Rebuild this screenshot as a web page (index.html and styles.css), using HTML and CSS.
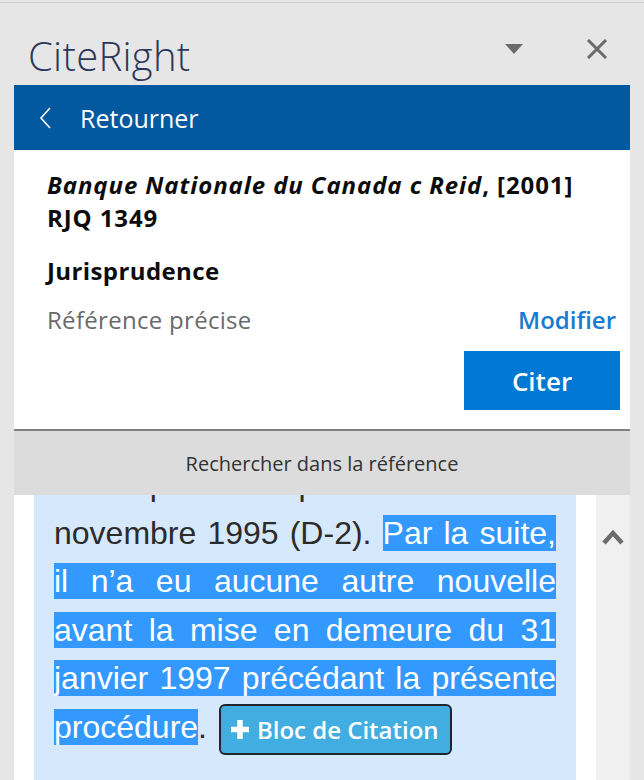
FILE: index.html
```html
<!DOCTYPE html>
<html lang="fr">
<head>
    <meta charset="UTF-8">
    <meta name="viewport" content="width=device-width, initial-scale=1.0">
    <title>CiteRight</title>
    <link rel="stylesheet" href="styles.css">
</head>
<body>

    <div class="pane">
        <div class="pane-header">
            <div class="pane-title">CiteRight</div>
            <div class="pane-actions">
                <svg class="icon-menu" width="18" height="10" viewBox="0 0 18 10">
                    <polygon points="0,0 18,0 9,10" fill="#6b6b6b"/>
                </svg>
                <svg class="icon-close" width="22" height="20" viewBox="0 0 22 20">
                    <path d="M2 1 L20 19 M20 1 L2 19" stroke="#6b6b6b" stroke-width="3"/>
                </svg>
            </div>
        </div>

        <div class="back-bar">
            <svg class="icon-back" width="13" height="22" viewBox="0 0 13 22">
                <path d="M11 1 L2 11 L11 21" fill="none" stroke="#fff" stroke-width="1.6"/>
            </svg>
            <span>Retourner</span>
        </div>

        <div class="card">
            <div class="card-title"><em>Banque Nationale du Canada c Reid</em>, [2001] RJQ 1349</div>
            <div class="card-type">Jurisprudence</div>
            <div class="card-row">
                <span class="muted">Référence précise</span>
                <a class="link" href="#">Modifier</a>
            </div>
            <div class="card-actions">
                <button class="btn-cite">Citer</button>
            </div>
        </div>

        <div class="search-bar">Rechercher dans la référence</div>

        <div class="doc">
            <div class="doc-page">
                <div class="doc-quote">
                    <p class="doc-text">cette par ses procédure le 27 novembre 1995 (D-2). <span class="hl">Par la suite, il n’a eu aucune autre nouvelle avant la mise en demeure du 31 janvier 1997 précédant la présente procédure</span>. <button class="btn-block"><svg width="20" height="21" viewBox="0 0 20 21"><path d="M10 1 V20 M1 10.5 H19" stroke="#fff" stroke-width="5.5"/></svg>Bloc de Citation</button></p>
                </div>
            </div>
            <div class="doc-scroll">
                <svg width="22" height="19" viewBox="0 0 22 19">
                    <path d="M2 16 L11 6 L20 16" fill="none" stroke="#6b6b6b" stroke-width="4.5"/>
                </svg>
            </div>
        </div>
    </div>

</body>
</html>
```

FILE: styles.css
```css
html, body {
    margin: 0;
    padding: 0;
    height: 780px;
    overflow: hidden;
}
body {
    background-color: #e6e6e6;
    font-family: "Open Sans", "Noto Sans", sans-serif;
    border-top: 1px solid #cfcfcf;
    margin-top: 2px;
}
.pane {
    padding: 0 14px;
}
.pane-header {
    display: flex;
    align-items: center;
    justify-content: space-between;
    height: 82px;
    box-sizing: border-box;
    padding: 24px 22px 0 14px;
}
.pane-title {
    font-size: 40px;
    font-weight: 300;
    letter-spacing: 0.3px;
    color: #2b375a;
    line-height: 1;
}
.pane-actions {
    display: flex;
    align-items: center;
    gap: 63px;
    margin-top: -14px;
}
.back-bar {
    display: flex;
    align-items: center;
    height: 65px;
    background-color: #02599f;
    color: #fff;
    font-size: 25px;
    padding-left: 25px;
}
.back-bar span {
    margin-left: 28px;
}
.card {
    background: #fff;
    padding: 18px 10px 19px 33px;
}
.card-title,
.card-type {
    font-size: 24px;
    font-weight: 700;
    letter-spacing: 0.9px;
    line-height: 33px;
    color: #0c0c0c;
    padding-right: 20px;
}
.card-type {
    margin-top: 20px;
    letter-spacing: 0.4px;
}
.card-row {
    display: flex;
    justify-content: space-between;
    align-items: center;
    line-height: 33px;
    margin-top: 16px;
    padding-right: 4px;
}
.muted {
    color: #6a6a6a;
    font-size: 24px;
    letter-spacing: 0.3px;
}
.link {
    color: #1a7bd0;
    font-size: 24px;
    font-weight: 600;
    text-decoration: none;
}
.card-actions {
    display: flex;
    justify-content: flex-end;
    margin-top: 15px;
}
.btn-cite {
    width: 156px;
    height: 59px;
    border: none;
    background: #0078d4;
    color: #fff;
    font-family: inherit;
    font-size: 26px;
    font-weight: 600;
}
.search-bar {
    border-top: 2px solid #7f7f7f;
    background: #dcdcdc;
    height: 64px;
    display: flex;
    align-items: center;
    justify-content: center;
    font-size: 20px;
    color: #333;
}
.doc {
    display: flex;
    height: 300px;
    overflow: hidden;
}
.doc-page {
    flex: 1;
    background: #fff;
    padding: 0 20px;
}
.doc-quote {
    background: #d6e8fb;
    padding: 0 20px;
    margin-top: -35px;
    min-height: 340px;
}
.doc-text {
    margin: 0;
    font-family: "Liberation Sans", Arial, sans-serif;
    font-size: 32px;
    line-height: 48.5px;
    text-align: justify;
    color: #2b2b2b;
}
.hl {
    background: #3399ff;
    color: #fff;
}
.btn-block {
    display: inline-flex;
    align-items: center;
    gap: 7px;
    vertical-align: middle;
    margin-left: 3px;
    height: 51px;
    padding: 0 11px 0 9px;
    background: #42ade0;
    border: 2px solid #1c2730;
    border-radius: 6px;
    color: #fff;
    font-family: "Open Sans", "Noto Sans", sans-serif;
    font-size: 24px;
    font-weight: 600;
}
.doc-scroll {
    width: 34px;
    background: #f0f0f0;
    display: flex;
    justify-content: center;
    padding-top: 32px;
    box-sizing: border-box;
}
```
